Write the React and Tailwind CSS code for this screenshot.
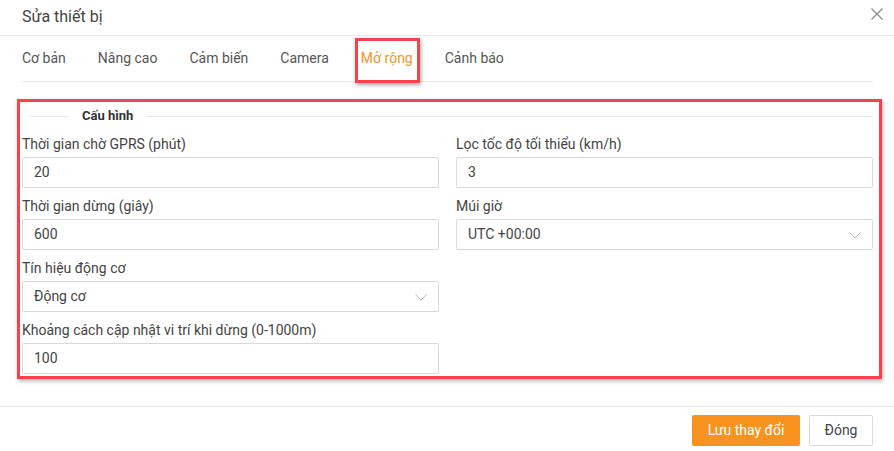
import { useState } from "react";

const tabs = ["Cơ bản", "Nâng cao", "Cảm biến", "Camera", "Mở rộng", "Cảnh báo"];

function Chevron() {
    return (
        <svg width="12" height="7" viewBox="0 0 12 7" className="absolute right-[11px] top-[12px]">
            <path d="M0.5 0.5 L6 6 L11.5 0.5" fill="none" stroke="#b5b5b5" strokeWidth="1" />
        </svg>
    );
}

function Field({ label, value, select }) {
    return (
        <div>
            <div className="text-[14px] leading-[18px] text-[#444] mb-[4px]">{label}</div>
            <div className="relative h-[31px] border border-[#d9d9d9] rounded-[2px] flex items-center px-[11px] text-[14px] text-[#444] bg-white">
                {value}
                {select && <Chevron />}
            </div>
        </div>
    );
}

export default function App() {
    const [active] = useState("Mở rộng");

    return (
        <div className="w-[894px] h-[451px] bg-white font-['Roboto',sans-serif] relative overflow-hidden">
            {/* header */}
            <div className="h-[36px] border-b border-[#e8e8e8] flex items-center justify-between pl-[22px] pr-[11px]">
                <span className="text-[16px] text-[#444] pb-[2px]">Sửa thiết bị</span>
                <svg width="12" height="12" viewBox="0 0 12 12" className="mb-[8px]">
                    <path d="M0.5 0.5 L11.5 11.5 M11.5 0.5 L0.5 11.5" stroke="#8c8c8c" strokeWidth="1.3" />
                </svg>
            </div>

            {/* tabs */}
            <div className="mx-[22px] w-[851px] h-[46px] border-b border-[#e8e8e8] flex items-center gap-[32px] text-[14px]">
                {tabs.map(t => (
                    <span key={t} className={t === active ? "text-[#f7931e]" : "text-[#555]"}>{t}</span>
                ))}
            </div>

            {/* annotation on active tab */}
            <div className="absolute left-[355px] top-[38px] w-[65px] h-[45px] border-[3px] border-[#f3444c] shadow-[1px_2px_4px_rgba(0,0,0,0.35)]" />

            {/* body */}
            <div className="ml-[17px] mt-[17px] w-[865px] h-[280px] border-[3px] border-[#f3444c] shadow-[1px_2px_4px_rgba(0,0,0,0.3)] pl-[2px] pr-[6px]">
                <div className="h-[28px] flex items-center">
                    <div className="ml-[8px] w-[39px] h-px bg-[#e8e8e8]" />
                    <span className="mx-[13px] text-[13px] font-bold text-[#333]">Cấu hình</span>
                    <div className="flex-1 h-px bg-[#e8e8e8]" />
                </div>
                <div className="mt-[5px] grid grid-cols-2 gap-x-[17px] gap-y-[9px]">
                    <Field label="Thời gian chờ GPRS (phút)" value="20" />
                    <Field label="Lọc tốc độ tối thiểu (km/h)" value="3" />
                    <Field label="Thời gian dừng (giây)" value="600" />
                    <Field label="Múi giờ" value="UTC +00:00" select />
                    <Field label="Tín hiệu động cơ" value="Động cơ" select />
                    <div />
                    <Field label="Khoảng cách cập nhật vi trí khi dừng (0-1000m)" value="100" />
                    <div />
                </div>
            </div>

            {/* footer */}
            <div className="mt-[27px] border-t border-[#e8e8e8] pt-[8px] pr-[21px] flex justify-end gap-[9px]">
                <button className="w-[108px] h-[31px] rounded-[2px] bg-[#f7931e] text-white text-[14px]">Lưu thay đổi</button>
                <button className="w-[64px] h-[31px] rounded-[2px] border border-[#d9d9d9] bg-white text-[#444] text-[14px]">Đóng</button>
            </div>
        </div>
    );
}
